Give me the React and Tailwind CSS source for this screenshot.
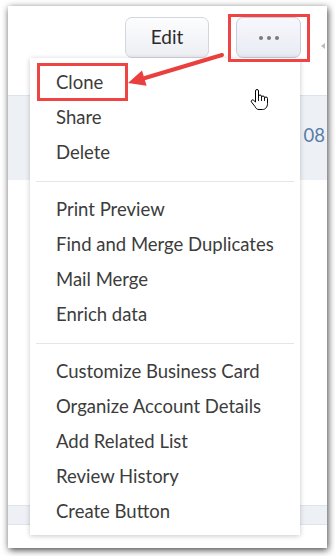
import React from "react";

const grupos = [
	["Clone", "Share", "Delete"],
	["Print Preview", "Find and Merge Duplicates", "Mail Merge", "Enrich data"],
	[
		"Customize Business Card",
		"Organize Account Details",
		"Add Related List",
		"Review History",
		"Create Button",
	],
];

const Mano = () => (
	<svg width="20" height="23" viewBox="0 0 20 23" className="absolute left-[241px] top-[82px]">
		<path
			d="M6.5 12 V3 a1.5 1.5 0 0 1 3 0 V10 V8.5 a1.5 1.5 0 0 1 3 0 V10.5 V9.5 a1.5 1.5 0 0 1 3 0 V11 V10.5 a1.5 1.5 0 0 1 3 0 V15.5 c0 3.5 -2 6 -5 6 H10 c-2 0 -3 -1 -4 -3 L2.6 14.2 a1.4 1.4 0 0 1 2.2 -1.8 L6.5 14 Z"
			fill="white"
			stroke="black"
			strokeWidth="1"
			strokeLinejoin="round"
		/>
		<path d="M9.5 10 V13 M12.5 10.5 V13 M15.5 11 V13" stroke="black" strokeWidth="0.9" />
	</svg>
);

export default function App() {
	return (
		<div
			className="w-[335px] h-[556px] bg-white pl-[8px] pt-[6px]"
			style={{ fontFamily: "Lato, 'Open Sans', sans-serif" }}>
			<div className="relative w-[319px] h-[542px] bg-white overflow-hidden shadow-[1px_2px_7px_rgba(0,0,0,0.75)]">
				{/* botones */}
				<div className="flex justify-end items-center gap-[27px] pt-[11px] pr-[26px]">
					<button className="w-[84px] h-[41px] rounded-[7px] border border-[#d3d6de] bg-gradient-to-b from-[#fdfdfe] to-[#eceef3] text-[19px] text-[#2a2a2a]">
						Edit
					</button>
					<button className="w-[65px] h-[41px] rounded-[7px] border border-[#c9cdd9] bg-gradient-to-b from-[#f7f8fc] to-[#e8ebf3] flex items-center justify-center gap-[4px]">
						<span className="w-[4px] h-[4px] rounded-full bg-[#7a7a7a]" />
						<span className="w-[4px] h-[4px] rounded-full bg-[#7a7a7a]" />
						<span className="w-[4px] h-[4px] rounded-full bg-[#7a7a7a]" />
					</button>
				</div>
				<div className="absolute left-[313px] top-[37px] w-0 h-0 border-y-[3px] border-y-transparent border-r-[4px] border-r-[#b8bcc4]" />

				{/* banda */}
				<div className="mt-[37px] h-[85px] bg-[#edf1f6] border-t border-[#dbe3ec] flex justify-end pt-[26px] pr-[2px]">
					<span className="text-[18.5px] text-[#5a7ca6]">: 08</span>
				</div>
				<div className="mt-[325px] h-[20px] bg-[#edf1f6] border-y border-[#dde4ec]" />

				{/* menu */}
				<div className="absolute left-[22px] top-[52px] w-[270px] bg-white shadow-[0_1px_5px_rgba(0,0,0,0.22)] pt-[7px] pb-[6px]">
					{grupos.map((grupo, i) => (
						<div key={i}>
							{i > 0 && <div className="mx-[6px] mt-[11px] mb-[10px] border-t border-[#e3e6ea]" />}
							{grupo.map((item) => (
								<div key={item} className="h-[35px] flex items-center pl-[26px] text-[18.5px] text-[#3c3c3c]">
									{item}
								</div>
							))}
						</div>
					))}
					<div className="absolute left-[7px] top-[5px] w-[91px] h-[38px] border-[3px] border-[#ef4444]" />
				</div>

				{/* marcas */}
				<div className="absolute left-[220px] top-[8px] w-[82px] h-[48px] border-[3px] border-[#ef4444]" />
				<svg width="319" height="120" className="absolute left-0 top-0 pointer-events-none">
					<line x1="214" y1="49" x2="137" y2="72" stroke="#ea3f3f" strokeWidth="4" strokeLinecap="round" />
					<polygon points="120,77 138.6,79.8 134,64.5" fill="#ea3f3f" />
				</svg>
				<Mano />
			</div>
		</div>
	);
}
